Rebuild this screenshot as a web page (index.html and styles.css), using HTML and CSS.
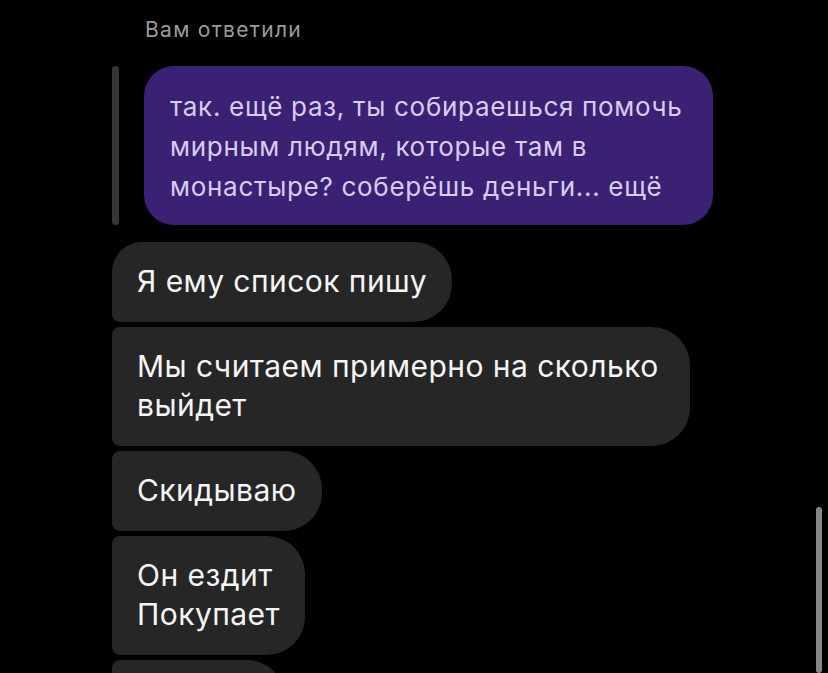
FILE: index.html
```html
<!DOCTYPE html>
<html lang="ru">
<head>
    <meta charset="UTF-8">
    <title>Чат</title>
    <link rel="stylesheet" href="styles.css">
</head>
<body>
    <main class="chat">
        <div class="reply-label">Вам ответили</div>

        <div class="reply">
            <div class="reply-bar"></div>
            <div class="bubble bubble-quoted">
                так. ещё раз, ты собираешься помочь<br>
                мирным людям, которые там в<br>
                монастыре? соберёшь деньги... ещё
            </div>
        </div>

        <div class="messages">
            <div class="bubble msg first">Я ему список пишу</div>
            <div class="bubble msg">Мы считаем примерно на сколько выйдет</div>
            <div class="bubble msg">Скидываю</div>
            <div class="bubble msg">Он ездит<br>Покупает</div>
            <div class="bubble msg msg-next"></div>
        </div>
    </main>

    <div class="scrollbar"></div>
</body>
</html>
```

FILE: styles.css
```css
html, body {
    margin: 0;
    padding: 0;
    height: 100%;
    overflow: hidden;
    background-color: #000;
}

body {
    font-family: Inter, Roboto, sans-serif;
    color: #f5f5f5;
}

.chat {
    padding: 16px 0 0 112px;
}

.reply-label {
    margin-left: 33px;
    font-size: 21px;
    line-height: 28px;
    letter-spacing: 1.3px;
    color: #9b9b9b;
}

.reply {
    display: flex;
    align-items: stretch;
    margin-top: 22px;
}

.reply-bar {
    width: 7px;
    border-radius: 4px;
    background-color: #363636;
    margin-right: 25px;
}

.bubble {
    border-radius: 30px;
    box-sizing: border-box;
}

.bubble-quoted {
    width: 569px;
    padding: 21px 26px 18px 26px;
    background-color: #3b2174;
    color: #d9ccf2;
    font-size: 26px;
    line-height: 40px;
    letter-spacing: 0.7px;
}

.messages {
    display: flex;
    flex-direction: column;
    align-items: flex-start;
    gap: 5px;
    margin-top: 17px;
}

.msg {
    max-width: 578px;
    padding: 20px 25px 21px 25px;
    background-color: #262626;
    font-size: 30px;
    line-height: 39px;
    letter-spacing: 0.45px;
    border-radius: 8px 38px 38px 8px;
}

.msg.first {
    border-top-left-radius: 30px;
}

.msg-next {
    width: 173px;
    height: 80px;
}

.scrollbar {
    position: absolute;
    top: 507px;
    left: 816px;
    width: 6px;
    height: 166px;
    border-radius: 3px;
    background-color: #878787;
}
```
